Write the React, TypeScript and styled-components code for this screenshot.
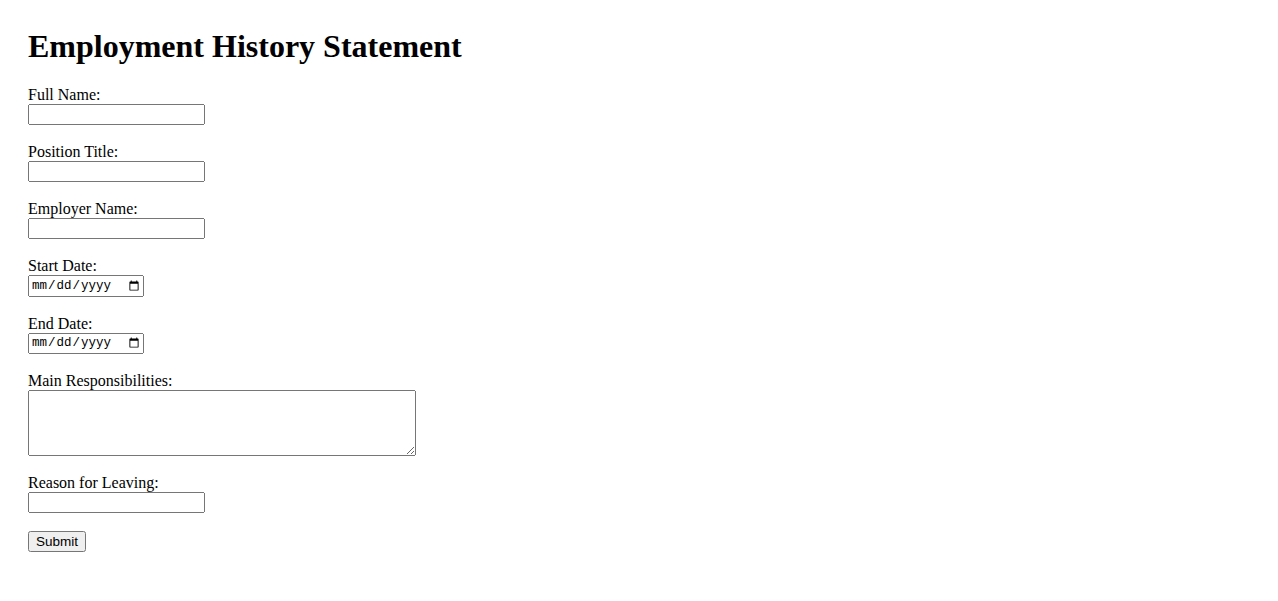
import React from "react";
import styled, { createGlobalStyle } from "styled-components";

const GlobalStyle = createGlobalStyle`
  body {
    margin: 8px;
    font-family: "Liberation Serif", "Times New Roman", serif;
    font-size: 16px;
    color: #000;
    background: #fff;
  }
`;

const Page = styled.div`
  padding: 20px;
`;

const Title = styled.h1`
  margin: 0 0 21px 0;
  font-size: 32px;
  font-weight: bold;
  line-height: 37px;
  font-family: "Liberation Serif", "Times New Roman", serif;
`;

const Form = styled.form`
  display: flex;
  flex-direction: column;
  align-items: flex-start;
`;

const Field = styled.div`
  display: flex;
  flex-direction: column;
  align-items: flex-start;
  margin-bottom: 18px;
`;

const Label = styled.label`
  display: block;
  line-height: 18px;
  height: 18px;
`;

const TextInput = styled.input`
  box-sizing: border-box;
  width: 177px;
  height: 21px;
  margin: 0;
  font-family: "Liberation Sans", Arial, sans-serif;
  font-size: 13.33px;
`;

const DateInput = styled.input`
  box-sizing: border-box;
  width: 116px;
  height: 21.5px;
  margin: 0;
  font-family: "Liberation Mono", "DejaVu Sans Mono", monospace;
  font-size: 12.5px;
`;

const TextArea = styled.textarea`
  box-sizing: border-box;
  width: 388px;
  height: 66px;
  margin: 0;
  font-family: "Liberation Mono", monospace;
  font-size: 13.33px;
`;

const SubmitButton = styled.button`
  box-sizing: border-box;
  width: 58px;
  height: 21px;
  margin: 0;
  padding: 0;
  font-family: "Liberation Sans", Arial, sans-serif;
  font-size: 13.5px;
`;

export default function App() {
  return (
    <>
      <GlobalStyle />
      <Page>
        <Title>Employment History Statement</Title>
        <Form onSubmit={(e) => e.preventDefault()}>
          <Field>
            <Label htmlFor="fullName">Full Name:</Label>
            <TextInput id="fullName" type="text" />
          </Field>
          <Field>
            <Label htmlFor="position">Position Title:</Label>
            <TextInput id="position" type="text" />
          </Field>
          <Field>
            <Label htmlFor="employer">Employer Name:</Label>
            <TextInput id="employer" type="text" />
          </Field>
          <Field>
            <Label htmlFor="start">Start Date:</Label>
            <DateInput id="start" type="date" />
          </Field>
          <Field>
            <Label htmlFor="end">End Date:</Label>
            <DateInput id="end" type="date" />
          </Field>
          <Field>
            <Label htmlFor="resp">Main Responsibilities:</Label>
            <TextArea id="resp" />
          </Field>
          <Field>
            <Label htmlFor="reason">Reason for Leaving:</Label>
            <TextInput id="reason" type="text" />
          </Field>
          <SubmitButton type="submit">Submit</SubmitButton>
        </Form>
      </Page>
    </>
  );
}
